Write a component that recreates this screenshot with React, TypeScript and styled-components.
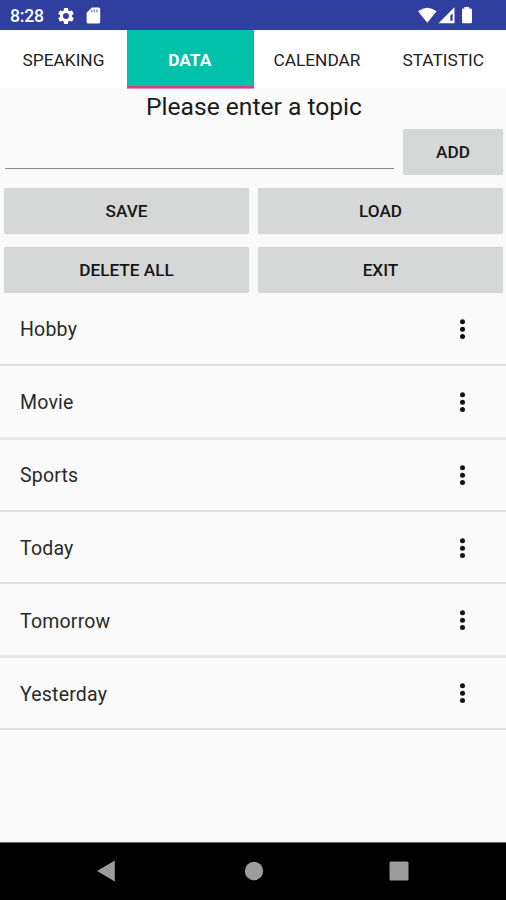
import React from 'react';
import styled, { createGlobalStyle } from 'styled-components';

const GlobalStyle = createGlobalStyle`
  *, *::before, *::after { box-sizing: border-box; }
  body { margin: 0; font-family: Roboto, "Liberation Sans", sans-serif; }
`;

const Screen = styled.div`
  display: flex;
  flex-direction: column;
  width: 506px;
  height: 900px;
  overflow: hidden;
  background: #fafafa;
  color: #1b1b1b;
`;

const StatusBar = styled.header`
  display: flex;
  align-items: center;
  flex: none;
  height: 30px;
  padding: 2px 30px 0 10px;
  background: #303f9f;
  color: #fff;
`;

const Clock = styled.span`
  width: 46px;
  font-size: 17.6px;
  font-weight: 500;
  line-height: 28px;
  letter-spacing: -0.25px;
`;

const StatusIcons = styled.div<{ $end?: boolean }>`
  display: flex;
  align-items: center;
  margin-left: ${({ $end }) => ($end ? 'auto' : '0')};
  svg { display: block; }
`;

const Tabs = styled.nav`
  display: grid;
  grid-template-columns: 127px 126.5px 127px 125.5px;
  flex: none;
  height: 58px;
  background: #fff;
`;

const Tab = styled.button<{ $active?: boolean }>`
  height: 58px;
  padding: ${({ $active }) => ($active ? '4px 1px 0 0' : '3px 0 1px')};
  border: 0;
  border-bottom: ${({ $active }) => ($active ? '2px solid #d6427f' : '0')};
  box-shadow: ${({ $active }) => ($active ? '0 1px 0 #e58bb0' : 'none')};
  background: ${({ $active }) => ($active ? '#02c1ab' : '#fff')};
  color: ${({ $active }) => ($active ? '#fff' : '#222')};
  font: ${({ $active }) => ($active ? 700 : 400)} 17.3px/20px Roboto, sans-serif;
`;

const Title = styled.h1`
  flex: none;
  height: 36px;
  margin: 0;
  padding: 4px 0 0 2px;
  font-size: 24.6px;
  font-weight: 400;
  line-height: 29px;
  text-align: center;
`;

const EntryRow = styled.form`
  display: flex;
  flex: none;
  gap: 9px;
  height: 59px;
  padding: 5px 3px 8px 5px;
`;

const TopicInput = styled.input`
  flex: 1;
  min-width: 0;
  height: 40px;
  padding: 0 5px;
  border: 0;
  border-bottom: 1px solid #8a8a8a;
  outline: 0;
  background: transparent;
  font: 400 22px Roboto, sans-serif;
`;

const Button = styled.button<{ $width?: number }>`
  width: ${({ $width }) => ($width ? `${$width}px` : 'auto')};
  height: 46px;
  padding: 0;
  border: 0;
  border-radius: 2px;
  background: #d6d8d7;
  box-shadow: 0 0 1px #d6d8d7;
  color: #161616;
  font: 500 17.2px/20px Roboto, sans-serif;
`;

const Actions = styled.div`
  display: grid;
  grid-template-columns: 245px 245px;
  grid-auto-rows: 46px;
  gap: 13px 9px;
  flex: none;
  height: 110px;
  padding: 5px 2px 0 4px;
`;

const TopicList = styled.ul`
  flex: 1;
  margin: 0;
  padding: 0;
  list-style: none;
`;

const TopicRow = styled.li<{ $soft?: boolean }>`
  display: flex;
  align-items: flex-start;
  justify-content: space-between;
  height: ${({ $soft }) => ($soft ? 73.85 : 72.85)}px;
  margin-bottom: ${({ $soft }) => ($soft ? '-1px' : '0')};
  padding: 24px 35px 0 20px;
  border-bottom: ${({ $soft }) => ($soft ? '3px solid #e8e8e8' : '2px solid #dedede')};
  color: #2a2a2a;
  svg { display: block; }
`;

const TopicName = styled.span`
  padding-top: 1.3px;
  font-size: 19.5px;
  line-height: 24px;
  letter-spacing: 0.2px;
`;

const NavBar = styled.footer`
  display: grid;
  grid-template-columns: 212px 83px 208px;
  align-items: center;
  justify-items: center;
  flex: none;
  height: 58px;
  padding-bottom: 1px;
  border-top: 1px solid #6d6d6d;
  background: #000;
  svg { display: block; }
`;

const Gear = () => (
  <svg width="20" height="20" viewBox="0 0 24 24" fill="#fff">
    <path d="M19.14 12.94c.04-.3.06-.61.06-.94s-.02-.64-.07-.94l2.03-1.58c.18-.14.23-.41.12-.61l-1.92-3.32c-.12-.22-.37-.29-.59-.22l-2.39.96c-.5-.38-1.03-.7-1.62-.94l-.36-2.54A.48.48 0 0 0 13.92 2.4h-3.84c-.24 0-.43.17-.47.41l-.36 2.54c-.59.24-1.13.57-1.62.94l-2.39-.96c-.22-.08-.47 0-.59.22L2.74 8.87c-.12.21-.08.47.12.61l2.03 1.58c-.05.3-.09.63-.09.94s.02.64.07.94l-2.03 1.58c-.18.14-.23.41-.12.61l1.92 3.32c.12.22.37.29.59.22l2.39-.96c.5.38 1.03.7 1.62.94l.36 2.54c.05.24.24.41.48.41h3.84c.24 0 .44-.17.47-.41l.36-2.54c.59-.24 1.13-.56 1.62-.94l2.39.96c.22.08.47 0 .59-.22l1.92-3.32c.12-.22.07-.47-.12-.61zM12 15.6A3.6 3.6 0 1 1 12 8.4a3.6 3.6 0 0 1 0 7.2z" />
  </svg>
);

const SdCard = () => (
  <svg width="28" height="20" viewBox="0 0 28 20">
    <path d="M15.8 1.6H22.6Q24.2 1.6 24.2 3.2V16Q24.2 17.6 22.6 17.6H12.2Q10.6 17.6 10.6 16V6.8Z" fill="#fff" />
    <path d="M15.6 3.6V6.2M18.3 3.6V6.2M21 3.6V6.2" stroke="#8d96ca" strokeWidth="1.6" />
  </svg>
);

const SignalIcons = () => (
  <svg width="58" height="20" viewBox="0 0 58 20">
    <path d="M0 5.2Q9.3-1.8 18.6 5.2L9.3 16.8Z" fill="#fff" />
    <path d="M20.5 17.2L36.5 1.3V17.2Z" fill="#fff" />
    <path d="M32.3 9.6L34.6 7.4V14.8H32.3Z" fill="#303f9f" />
    <path d="M46.3 2.5V0.9H51.2V2.5H52.7Q54 2.5 54 3.9V15.9Q54 17.3 52.7 17.3H45.4Q44 17.3 44 15.9V3.9Q44 2.5 45.4 2.5Z" fill="#fff" />
  </svg>
);

const MoreIcon = () => (
  <svg width="18" height="24" viewBox="0 0 18 24" fill="#111">
    <circle cx="9.5" cy="4.8" r="2.5" />
    <circle cx="9.5" cy="12.2" r="2.5" />
    <circle cx="9.5" cy="19.6" r="2.5" />
  </svg>
);

const topics = [
  { name: 'Hobby' },
  { name: 'Movie', soft: true },
  { name: 'Sports' },
  { name: 'Today' },
  { name: 'Tomorrow', soft: true },
  { name: 'Yesterday' },
];

const tabs = ['SPEAKING', 'DATA', 'CALENDAR', 'STATISTIC'];

export default function App() {
  return (
    <>
      <GlobalStyle />
      <Screen>
        <StatusBar>
          <Clock>8:28</Clock>
          <StatusIcons>
            <Gear />
            <SdCard />
          </StatusIcons>
          <StatusIcons $end>
            <SignalIcons />
          </StatusIcons>
        </StatusBar>
        <Tabs>
          {tabs.map((tab) => (
            <Tab key={tab} $active={tab === 'DATA'}>{tab}</Tab>
          ))}
        </Tabs>
        <Title>Please enter a topic</Title>
        <EntryRow onSubmit={(event) => event.preventDefault()}>
          <TopicInput aria-label="Topic" />
          <Button $width={100}>ADD</Button>
        </EntryRow>
        <Actions>
          <Button>SAVE</Button>
          <Button>LOAD</Button>
          <Button>DELETE ALL</Button>
          <Button>EXIT</Button>
        </Actions>
        <TopicList>
          {topics.map(({ name, soft }) => (
            <TopicRow key={name} $soft={soft}>
              <TopicName>{name}</TopicName>
              <MoreIcon />
            </TopicRow>
          ))}
        </TopicList>
        <NavBar>
          <svg width="20" height="22" viewBox="0 0 20 22"><path d="M1 11L18.8 0.5V21.5Z" fill="#9c9c9c" /></svg>
          <svg width="20" height="20" viewBox="0 0 20 20"><circle cx="10" cy="10" r="9.2" fill="#9c9c9c" /></svg>
          <svg width="20" height="20" viewBox="0 0 20 20"><rect x="0.5" y="0.5" width="19" height="19" rx="1.5" fill="#9c9c9c" /></svg>
        </NavBar>
      </Screen>
    </>
  );
}
